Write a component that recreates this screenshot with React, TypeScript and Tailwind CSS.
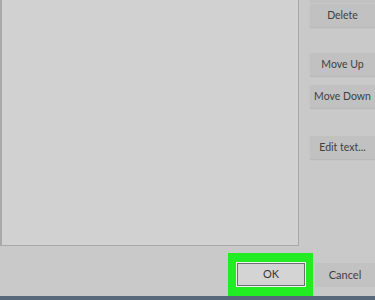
const font = { fontFamily: 'Lato, "Open Sans", sans-serif' };

function SideButton({ label, className = "" }: { label: string; className?: string }) {
  return (
    <div
      className={`h-[23px] w-[65px] bg-[#c1c1c1] shadow-[0_1px_1px_rgba(0,0,0,0.08)] flex items-center justify-center text-[10.5px] text-[#404040] ${className}`}
    >
      {label}
    </div>
  );
}

export default function App() {
  return (
    <div className="w-[375px] h-[300px] bg-[#c9c9c9] flex flex-col overflow-hidden" style={font}>
      <div className="flex h-[246px]">
        <div className="w-[299px] h-full bg-[#d1d1d1] border-l-2 border-r border-b border-[#a9a9a9] flex flex-col">
          <div className="mt-[21px] mx-[14px] h-[2px] bg-[#cdcdcd]" />
          <div className="mt-[70px] mx-[14px] h-[1px] bg-[#cecece]" />
          <div className="mt-[14px] mx-[14px] h-[2px] bg-[#cdcdcd]" />
          <div className="mt-[144px] mx-[14px] h-[1px] bg-[#cecece]" />
        </div>
        <div className="flex flex-col pl-[11px]">
          <div className="h-[3px] w-[65px] bg-[#c1c1c1]" />
          <SideButton label="Delete" className="mt-[1px]" />
          <SideButton label="Move Up" className="mt-[26px]" />
          <SideButton label="Move Down" className="mt-[9px]" />
          <SideButton label="Edit text..." className="mt-[28px]" />
        </div>
      </div>
      <div className="flex h-[50px] items-start">
        <div className="ml-[228px] mt-[7px] bg-[#22ec22] pl-[9px] pr-[8px] pt-[10px] pb-[10px]">
          <div className="w-[68px] h-[23px] bg-[#d4d4d4] border border-[#6f6f6f] outline outline-1 outline-[#f2f2f2] flex items-center justify-center text-[11px] text-[#383838]">
            OK
          </div>
        </div>
        <div className="ml-[2px] mt-[17px] h-[24px] w-[62px] bg-[#c2c2c2] flex items-center justify-center text-[11px] text-[#404040]">
          Cancel
        </div>
      </div>
      <div className="h-[4px] bg-[#56687a]" />
    </div>
  );
}
